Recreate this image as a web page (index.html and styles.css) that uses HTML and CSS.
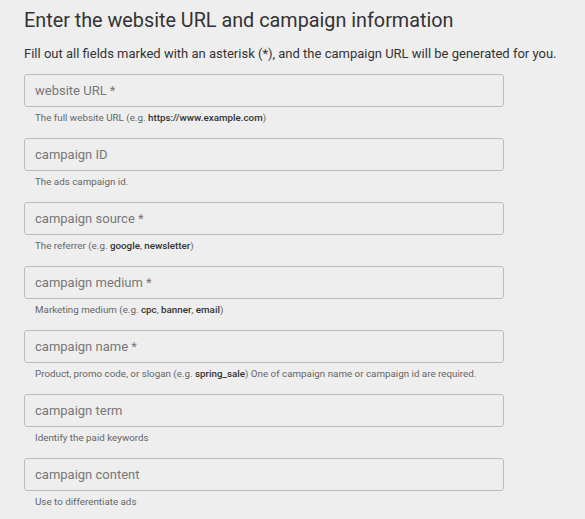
FILE: index.html
```html
<!DOCTYPE html>
<html>
<head>
<meta charset="utf-8">
<link rel="stylesheet" href="styles.css">
</head>
<body>
<div class="page">
  <h1 class="title">Enter the website URL and campaign information</h1>
  <p class="intro">Fill out all fields marked with an asterisk (*), and the campaign URL will be generated for you.</p>
  <div class="fields">
    <div class="field">
      <div class="box">website URL *</div>
      <div class="help">The full website URL (e.g. <b>https://www.example.com</b>)</div>
    </div>
    <div class="field">
      <div class="box">campaign ID</div>
      <div class="help">The ads campaign id.</div>
    </div>
    <div class="field">
      <div class="box">campaign source *</div>
      <div class="help">The referrer (e.g. <b>google</b>, <b>newsletter</b>)</div>
    </div>
    <div class="field">
      <div class="box">campaign medium *</div>
      <div class="help">Marketing medium (e.g. <b>cpc</b>, <b>banner</b>, <b>email</b>)</div>
    </div>
    <div class="field">
      <div class="box">campaign name *</div>
      <div class="help">Product, promo code, or slogan (e.g. <b>spring_sale</b>) One of campaign name or campaign id are required.</div>
    </div>
    <div class="field">
      <div class="box">campaign term</div>
      <div class="help">Identify the paid keywords</div>
    </div>
    <div class="field">
      <div class="box">campaign content</div>
      <div class="help">Use to differentiate ads</div>
    </div>
  </div>
</div>
</body>
</html>
```

FILE: styles.css
```css
html, body {
  margin: 0;
  padding: 0;
  background: #eeeeee;
}
body {
  font-family: Roboto, "Liberation Sans", sans-serif;
  color: #333;
}
.page {
  padding: 9px 24px 0 24px;
}
.title {
  margin: 0;
  font-size: 19.8px;
  font-weight: 400;
  line-height: 24px;
  color: #333;
}
.intro {
  margin: 12px 0 0 0;
  font-size: 13px;
  line-height: 18px;
  color: #333;
}
.fields {
  margin-top: 11px;
  display: flex;
  flex-direction: column;
}
.field {
  height: 64px;
  display: flex;
  flex-direction: column;
}
.box {
  width: 480px;
  height: 33px;
  box-sizing: border-box;
  border: 1px solid #bdbdbd;
  border-radius: 3px;
  padding: 0 10px;
  font-size: 13px;
  line-height: 31px;
  color: #777;
}
.help {
  margin-top: 5px;
  padding-left: 11px;
  font-size: 9.8px;
  line-height: 12px;
  color: #666;
}
.help b {
  font-weight: 500;
  color: #333;
}
```
